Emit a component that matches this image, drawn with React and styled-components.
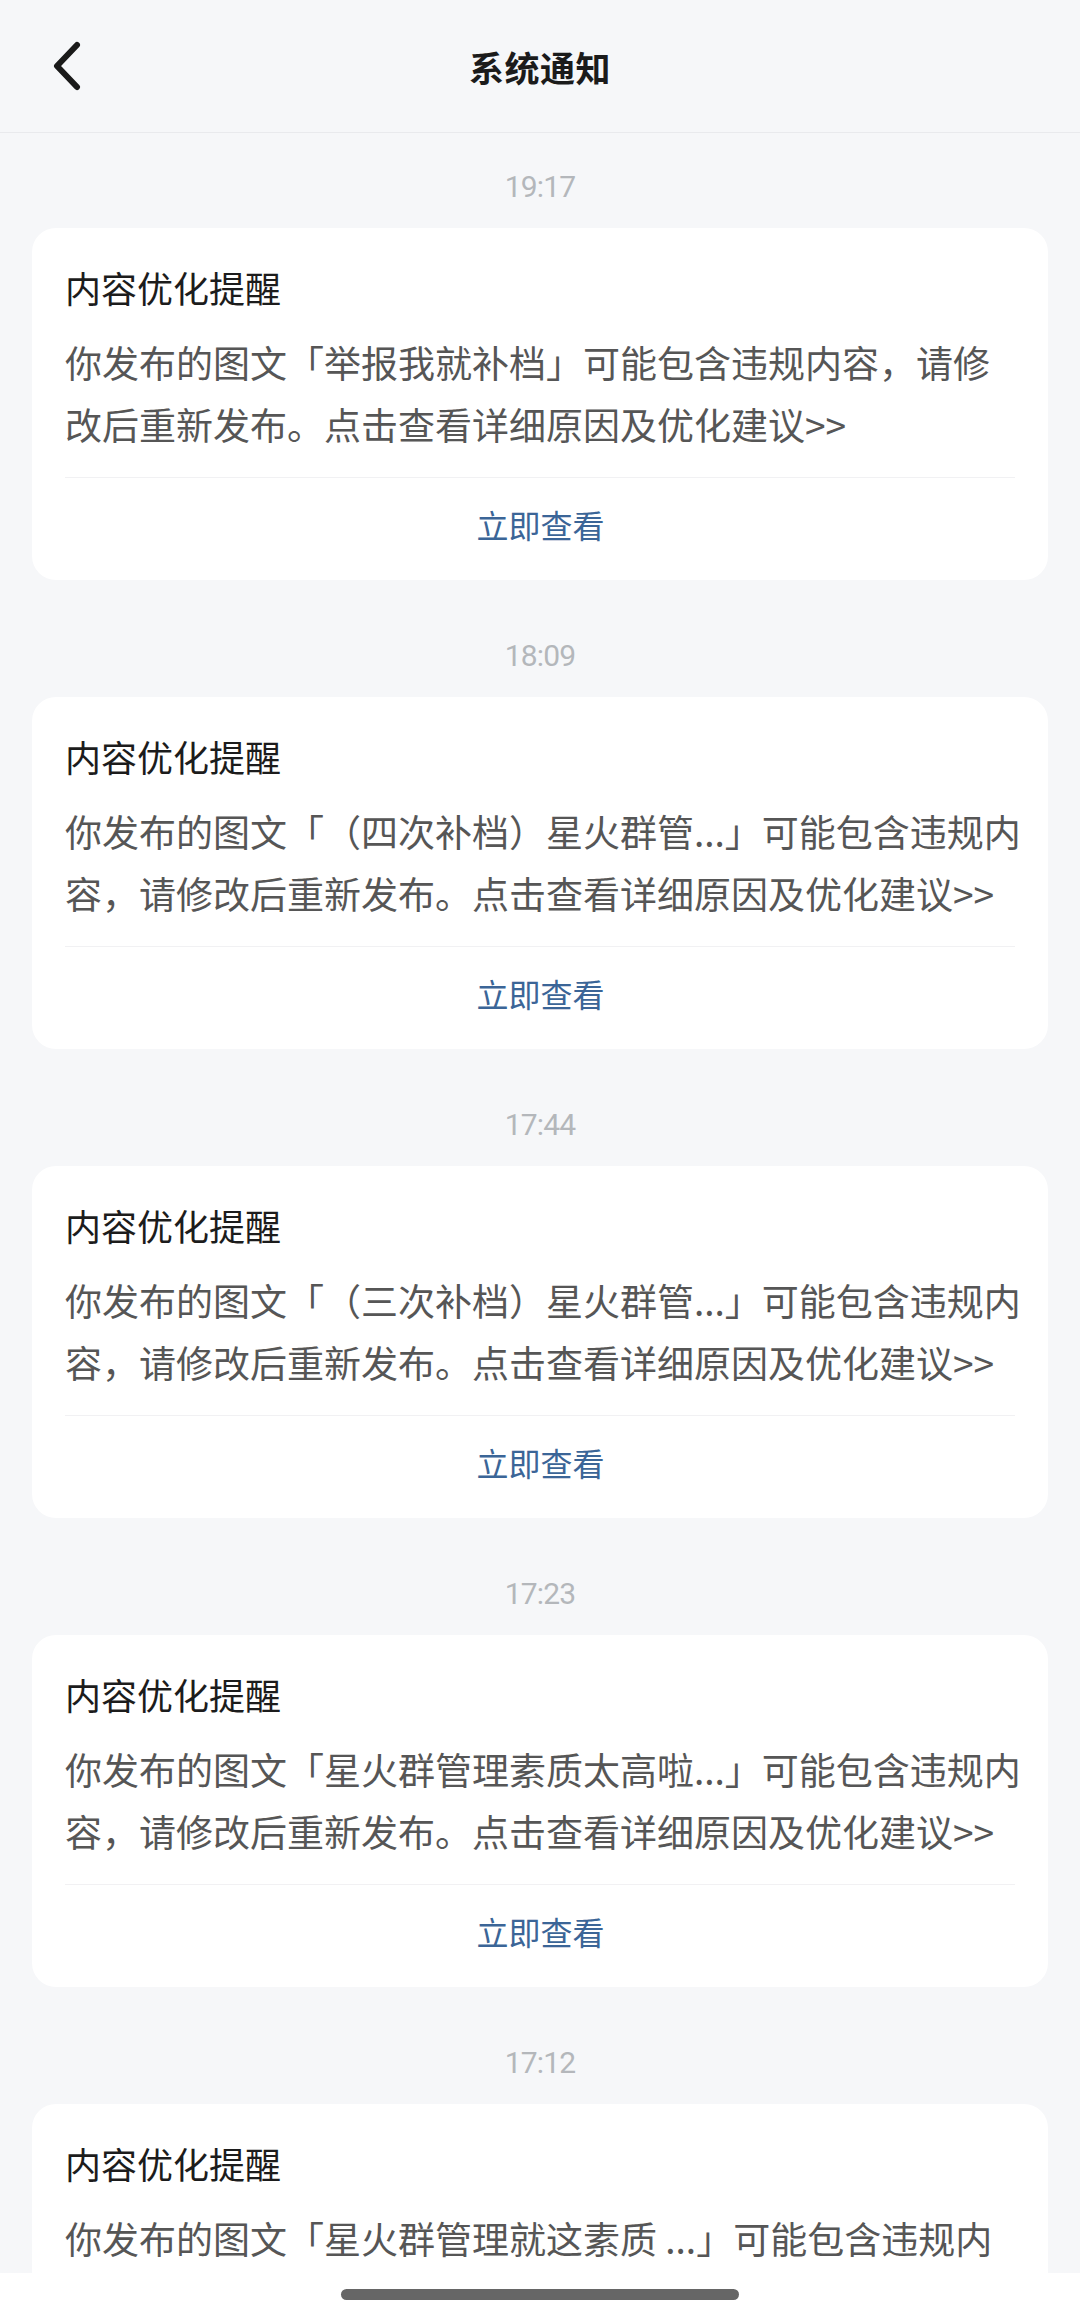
import React from "react";
import styled, { createGlobalStyle } from "styled-components";

const GlobalStyle = createGlobalStyle`
  html, body {
    margin: 0;
    padding: 0;
    background: #f6f7f9;
  }
  * {
    box-sizing: border-box;
  }
`;

const FONT = `"Noto Sans CJK SC", "Noto Sans", sans-serif`;

const Styled_Screen = styled.div`
  width: 1080px;
  height: 2316px;
  display: flex;
  flex-direction: column;
  overflow: hidden;
  background: #f6f7f9;
  font-family: ${FONT};
  text-spacing-trim: space-all;
`;

const Styled_Header = styled.header`
  flex: 0 0 auto;
  height: 133px;
  display: grid;
  grid-template-columns: 1fr auto 1fr;
  align-items: center;
  border-bottom: 1px solid #e9eaed;
  background: #f6f7f9;
`;

const Styled_BackButton = styled.button`
  justify-self: start;
  display: flex;
  align-items: center;
  justify-content: center;
  margin-left: 40px;
  margin-top: 2px;
  width: 56px;
  height: 56px;
  padding: 0;
  border: none;
  background: transparent;
`;

const Styled_HeaderTitle = styled.h1`
  margin: 0;
  font-size: 35px;
  font-weight: 700;
  color: #1b1b1b;
  letter-spacing: 0.5px;
`;

const Styled_List = styled.main`
  flex: 1 1 auto;
  overflow: hidden;
  padding: 7px 32px 0;
`;

const Styled_Group = styled.section`
  margin-bottom: 29px;
`;

const Styled_Time = styled.div`
  height: 88px;
  display: flex;
  align-items: center;
  justify-content: center;
  font-family: Roboto, "Liberation Sans", sans-serif;
  font-size: 30px;
  letter-spacing: -0.8px;
  color: #b4b7bb;
  padding-top: 4px;
`;

const Styled_Card = styled.article`
  background: #ffffff;
  border-radius: 24px;
  padding: 34px 24px 0 33px;
`;

const Styled_CardTitle = styled.h2`
  margin: 0;
  font-size: 36px;
  line-height: 50px;
  font-weight: 400;
  color: #1c1c1c;
`;

const Styled_CardBody = styled.p`
  margin: 19px 0 0;
  font-size: 37px;
  line-height: 62px;
  color: #565656;
`;

const Styled_Divider = styled.div`
  margin: 22px 9px 0 0;
  height: 1px;
  background: #f1f1f3;
`;

const Styled_Action = styled.button`
  display: flex;
  align-items: center;
  justify-content: center;
  width: 100%;
  height: 102px;
  margin-left: -4px;
  padding: 0 0 10px;
  border: none;
  background: transparent;
  font-family: ${FONT};
  font-size: 32px;
  color: #3b6597;
`;

const Styled_HomeBar = styled.div`
  flex: 0 0 43px;
  display: flex;
  align-items: center;
  justify-content: center;
  background: #ffffff;
`;

const Styled_HomeIndicator = styled.div`
  width: 398px;
  height: 11px;
  border-radius: 6px;
  background: #666666;
`;

const notices = [
  {
    time: "19:17",
    body: "你发布的图文「举报我就补档」可能包含违规内容，请修改后重新发布。点击查看详细原因及优化建议>>",
  },
  {
    time: "18:09",
    body: "你发布的图文「（四次补档）星火群管...」可能包含违规内容，请修改后重新发布。点击查看详细原因及优化建议>>",
  },
  {
    time: "17:44",
    body: "你发布的图文「（三次补档）星火群管...」可能包含违规内容，请修改后重新发布。点击查看详细原因及优化建议>>",
  },
  {
    time: "17:23",
    body: "你发布的图文「星火群管理素质太高啦...」可能包含违规内容，请修改后重新发布。点击查看详细原因及优化建议>>",
  },
  {
    time: "17:12",
    body: "你发布的图文「星火群管理就这素质 ...」可能包含违规内容，请修改后重新发布。点击查看详细原因及优化建议>>",
  },
];

const BackIcon = () => (
  <svg width="40" height="52" viewBox="0 0 40 52" fill="none">
    <path
      d="M29 4 L9 25 L29 46"
      stroke="#1a1a1a"
      strokeWidth="6"
      strokeLinecap="round"
      strokeLinejoin="round"
    />
  </svg>
);

const App = () => (
  <>
    <GlobalStyle />
    <Styled_Screen>
      <Styled_Header>
        <Styled_BackButton aria-label="返回">
          <BackIcon />
        </Styled_BackButton>
        <Styled_HeaderTitle>系统通知</Styled_HeaderTitle>
        <div />
      </Styled_Header>
      <Styled_List>
        {notices.map((n) => (
          <Styled_Group key={n.time}>
            <Styled_Time>{n.time}</Styled_Time>
            <Styled_Card>
              <Styled_CardTitle>内容优化提醒</Styled_CardTitle>
              <Styled_CardBody>{n.body}</Styled_CardBody>
              <Styled_Divider />
              <Styled_Action>立即查看</Styled_Action>
            </Styled_Card>
          </Styled_Group>
        ))}
      </Styled_List>
      <Styled_HomeBar>
        <Styled_HomeIndicator />
      </Styled_HomeBar>
    </Styled_Screen>
  </>
);

export default App;
